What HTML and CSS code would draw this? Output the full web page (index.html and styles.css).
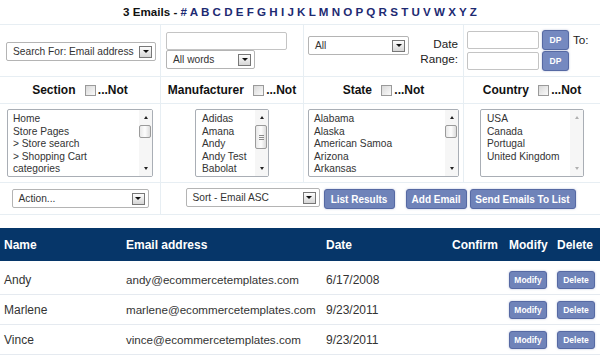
FILE: index.html
```html
<!DOCTYPE html>
<html lang="en">
<head>
    <meta charset="UTF-8">
    <meta name="viewport" content="width=device-width, initial-scale=1.0">
    <title>Emails</title>
    <link rel="stylesheet" href="styles.css">
</head>
<body>
    <div class="title">
        3 Emails - <a>#</a> <a>A</a> <a>B</a> <a>C</a> <a>D</a> <a>E</a> <a>F</a> <a>G</a> <a>H</a> <a>I</a> <a>J</a> <a>K</a> <a>L</a> <a>M</a> <a>N</a> <a>O</a> <a>P</a> <a>Q</a> <a>R</a> <a>S</a> <a>T</a> <a>U</a> <a>V</a> <a>W</a> <a>X</a> <a>Y</a> <a>Z</a>
    </div>

    <div class="filters">
        <!-- row 1 -->
        <div class="cell search-cell">
            <div class="dropdown dd-search"><span>Search For: Email address</span><i class="arrow"></i></div>
        </div>
        <div class="cell words-cell">
            <input type="text" class="textbox tb-words">
            <div class="dropdown dd-words"><span>All words</span><i class="arrow"></i></div>
        </div>
        <div class="cell all-cell">
            <div class="dropdown dd-all"><span>All</span><i class="arrow"></i></div>
            <div class="date-label">Date<br>Range:</div>
        </div>
        <div class="cell date-cell">
            <div class="date-fields">
                <div class="date-row"><input type="text" class="textbox tb-date"><button class="btn btn-dp">DP</button></div>
                <div class="date-row"><input type="text" class="textbox tb-date"><button class="btn btn-dp">DP</button></div>
            </div>
            <span class="to-label">To:</span>
        </div>

        <!-- row 2 -->
        <div class="cell head-cell">Section <span class="check"></span><span class="not">...Not</span></div>
        <div class="cell head-cell">Manufacturer <span class="check"></span><span class="not">...Not</span></div>
        <div class="cell head-cell">State <span class="check"></span><span class="not">...Not</span></div>
        <div class="cell head-cell">Country <span class="check"></span><span class="not">...Not</span></div>

        <!-- row 3 -->
        <div class="cell box-cell">
            <div class="listbox lb-section">
                <ul class="options">
                    <li>Home</li>
                    <li>Store Pages</li>
                    <li>&gt; Store search</li>
                    <li>&gt; Shopping Cart</li>
                    <li>categories</li>
                </ul>
                <div class="scrollbar"><span class="sb-up"></span><span class="sb-track"><span class="sb-thumb"></span></span><span class="sb-down"></span></div>
            </div>
        </div>
        <div class="cell box-cell">
            <div class="listbox lb-manu">
                <ul class="options">
                    <li>Adidas</li>
                    <li>Amana</li>
                    <li>Andy</li>
                    <li>Andy Test</li>
                    <li>Babolat</li>
                </ul>
                <div class="scrollbar"><span class="sb-up"></span><span class="sb-track"><span class="sb-thumb tall"></span></span><span class="sb-down"></span></div>
            </div>
        </div>
        <div class="cell box-cell">
            <div class="listbox lb-state">
                <ul class="options">
                    <li>Alabama</li>
                    <li>Alaska</li>
                    <li>American Samoa</li>
                    <li>Arizona</li>
                    <li>Arkansas</li>
                </ul>
                <div class="scrollbar"><span class="sb-up"></span><span class="sb-track"><span class="sb-thumb"></span></span><span class="sb-down"></span></div>
            </div>
        </div>
        <div class="cell box-cell">
            <div class="listbox lb-country">
                <ul class="options">
                    <li>USA</li>
                    <li>Canada</li>
                    <li>Portugal</li>
                    <li>United Kingdom</li>
                </ul>
                <div class="scrollbar disabled"><span class="sb-up"></span><span class="sb-track"></span><span class="sb-down"></span></div>
            </div>
        </div>

        <!-- row 4 -->
        <div class="cell action-cell">
            <div class="dropdown dd-action"><span>Action...</span><i class="arrow"></i></div>
        </div>
        <div class="cell buttons-cell">
            <div class="dropdown dd-sort"><span>Sort - Email ASC</span><i class="arrow"></i></div>
            <button class="btn btn-list">List Results</button>
            <button class="btn btn-add">Add Email</button>
            <button class="btn btn-send">Send Emails To List</button>
        </div>
    </div>

    <div class="emails">
        <div class="email-row email-head">
            <div>Name</div>
            <div>Email address</div>
            <div>Date</div>
            <div>Confirm</div>
            <div>Modify</div>
            <div>Delete</div>
        </div>
        <div class="email-body">
            <div class="email-row">
                <div>Andy</div>
                <div class="addr">andy@ecommercetemplates.com</div>
                <div>6/17/2008</div>
                <div></div>
                <div><button class="btn btn-small">Modify</button></div>
                <div><button class="btn btn-small">Delete</button></div>
            </div>
            <div class="email-row">
                <div>Marlene</div>
                <div class="addr">marlene@ecommercetemplates.com</div>
                <div>9/23/2011</div>
                <div></div>
                <div><button class="btn btn-small">Modify</button></div>
                <div><button class="btn btn-small">Delete</button></div>
            </div>
            <div class="email-row">
                <div>Vince</div>
                <div class="addr">vince@ecommercetemplates.com</div>
                <div>9/23/2011</div>
                <div></div>
                <div><button class="btn btn-small">Modify</button></div>
                <div><button class="btn btn-small">Delete</button></div>
            </div>
        </div>
    </div>
</body>
</html>
```

FILE: styles.css
```css
body {
    margin: 0;
    font-family: "Liberation Sans", Arial, sans-serif;
    color: #333;
    background: #fff;
}

.title {
    height: 24px;
    line-height: 24px;
    text-align: center;
    font-size: 11.6px;
    font-weight: bold;
    color: #111;
    border-bottom: 1px solid #e7eef3;
}

.title a {
    color: #1d2a72;
    text-decoration: none;
}

/* filter grid */
.filters {
    display: grid;
    grid-template-columns: 161px 143px 160px 136px;
    grid-template-rows: 52px 27px 79px 32px;
}

.cell {
    box-sizing: border-box;
    border-right: 1px solid #e7eef3;
    border-bottom: 1px solid #e7eef3;
}

.cell:nth-child(4n) {
    border-right: none;
}

.dropdown {
    box-sizing: border-box;
    height: 19px;
    display: flex;
    align-items: center;
    justify-content: space-between;
    padding: 0 3px 0 6px;
    border: 1px solid #b4b4b4;
    border-radius: 2px;
    background: #fff;
    font-size: 10.2px;
    color: #333;
}

.arrow {
    box-sizing: border-box;
    width: 13px;
    height: 12px;
    border: 1px solid #777;
    background: linear-gradient(#fdfdfd, #d6d6d6);
    display: flex;
    align-items: center;
    justify-content: center;
}

.arrow::after {
    content: "";
    border-left: 3px solid transparent;
    border-right: 3px solid transparent;
    border-top: 3px solid #111;
}

.textbox {
    box-sizing: border-box;
    display: block;
    margin: 0;
    padding: 0;
    border: 1px solid #c4c4c4;
    border-radius: 2px;
    background: #fff;
}

.search-cell {
    padding: 17px 0 0 6px;
}

.dd-search {
    width: 150px;
}

.words-cell {
    padding: 7px 0 0 5px;
}

.tb-words {
    width: 121px;
    height: 18px;
}

.dd-words {
    width: 89px;
}

.all-cell {
    display: flex;
    align-items: flex-start;
    padding: 11px 5px 0 4px;
}

.dd-all {
    width: 101px;
}

.date-label {
    margin-left: auto;
    text-align: right;
    font-size: 11.7px;
    line-height: 15px;
    color: #222;
}

.date-cell {
    display: flex;
    align-items: flex-start;
    padding: 5px 0 0 3px;
}

.date-fields {
    display: flex;
    flex-direction: column;
    gap: 1px;
}

.date-row {
    display: flex;
    align-items: center;
    height: 20px;
}

.tb-date {
    width: 72px;
    height: 18px;
    margin-right: 3px;
}

.to-label {
    margin: 3px 0 0 4px;
    font-size: 11.7px;
    color: #222;
}

/* buttons */
.btn {
    box-sizing: border-box;
    padding: 0;
    border: 1px solid #5669a3;
    border-radius: 3px;
    background: #6f83b9;
    color: #fff;
    font-family: "Liberation Sans", Arial, sans-serif;
    font-weight: bold;
    box-shadow: 0 0 2px rgba(95, 115, 175, 0.5);
}

.btn-dp {
    width: 27px;
    height: 20px;
    font-size: 8.5px;
    background: #7589c0;
}

/* section headers */
.head-cell {
    display: flex;
    align-items: center;
    justify-content: center;
    font-size: 12px;
    font-weight: bold;
    color: #111;
    white-space: pre;
}

.check {
    box-sizing: border-box;
    width: 11px;
    height: 11px;
    margin-left: 6px;
    border: 1px solid #9a9a9a;
    background: linear-gradient(135deg, #d9d9d9, #fafafa);
}

.not {
    margin-left: 2px;
}

/* list boxes */
.box-cell {
    display: flex;
    justify-content: center;
    padding-top: 5px;
}

.listbox {
    box-sizing: border-box;
    height: 68px;
    display: flex;
    border: 1px solid #a9aeb5;
    border-radius: 2px;
    background: #fff;
}

.lb-section { width: 146px; }
.lb-manu { width: 74px; }
.lb-state { width: 151px; }
.lb-country { width: 104px; }

.options {
    flex: 1;
    list-style: none;
    margin: 0;
    padding: 3px 0 0 5px;
    font-size: 10.2px;
    line-height: 12.5px;
    color: #333;
    white-space: nowrap;
    overflow: hidden;
}

.lb-manu .options { padding-left: 6px; }
.lb-country .options { padding-left: 6px; }

.scrollbar {
    width: 13px;
    display: flex;
    flex-direction: column;
    background: #f6f6f6;
}

.sb-up, .sb-down {
    height: 15px;
    display: flex;
    justify-content: center;
    align-items: center;
}

.sb-up::after {
    content: "";
    border-left: 2.5px solid transparent;
    border-right: 2.5px solid transparent;
    border-bottom: 3px solid #222;
}

.sb-down::after {
    content: "";
    border-left: 2.5px solid transparent;
    border-right: 2.5px solid transparent;
    border-top: 3px solid #222;
}

.disabled .sb-up::after { border-bottom-color: #b0b0b0; }
.disabled .sb-down::after { border-top-color: #b0b0b0; }

.sb-track {
    flex: 1;
}

.sb-thumb {
    box-sizing: border-box;
    display: flex;
    align-items: center;
    justify-content: center;
    width: 12px;
    height: 13px;
    border: 1px solid #9b9b9b;
    border-radius: 2px;
    background: linear-gradient(90deg, #e8e8e8, #fdfdfd 50%, #dcdcdc);
}

.sb-thumb.tall {
    height: 24px;
}

.sb-thumb.tall::after {
    content: "";
    width: 5px;
    height: 5px;
    background: repeating-linear-gradient(#8a8a8a 0 1px, transparent 1px 2px);
}

/* bottom action row */
.action-cell {
    display: flex;
    justify-content: center;
    padding-top: 6px;
}

.dd-action {
    width: 137px;
}

.buttons-cell {
    grid-column: span 3;
    border-right: none;
    display: flex;
    align-items: flex-start;
    justify-content: center;
    padding-top: 5px;
}

.dd-sort {
    width: 134px;
}

.buttons-cell .btn {
    height: 20px;
    margin-top: 1px;
    font-size: 10px;
}

.btn-list { width: 71px; margin-left: 4px; }
.btn-add { width: 61px; margin-left: 11px; }
.btn-send { width: 106px; margin-left: 3px; }

/* email list */
.emails {
    margin-top: 13px;
}

.email-row {
    display: grid;
    grid-template-columns: 122px 200px 126px 57px 48px 47px;
    align-items: center;
    box-sizing: border-box;
    height: 30px;
    border-bottom: 1px solid #e5eaf0;
    font-size: 12px;
    color: #333;
}

.email-row > div {
    padding-left: 4px;
    white-space: nowrap;
}

.email-row > .addr {
    font-size: 11.6px;
}

.email-head {
    height: 33px;
    border-bottom: none;
    background: #063669;
    color: #fff;
    font-weight: bold;
}

.email-body {
    margin-top: 4px;
}

.btn-small {
    display: block;
    width: 38px;
    height: 18px;
    font-size: 8.5px;
}
```
